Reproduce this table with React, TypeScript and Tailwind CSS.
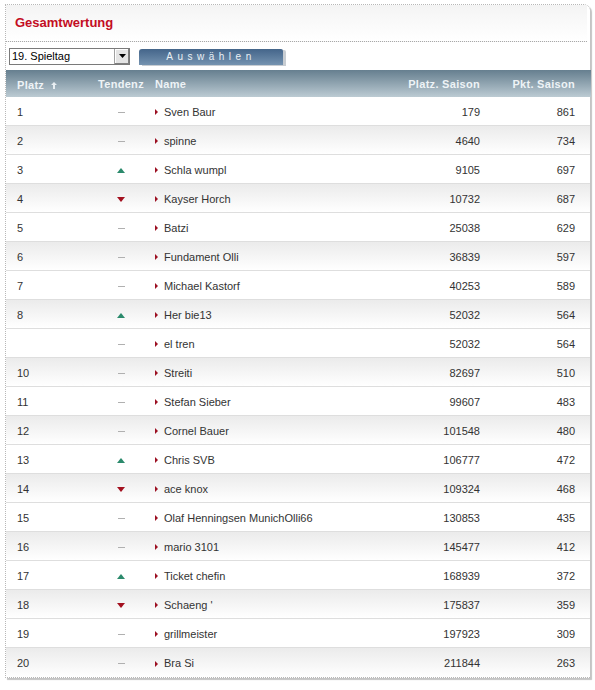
import React from "react";

type Trend = "up" | "down" | "same";

type Row = {
  platz: string;
  trend: Trend;
  name: string;
  saisonPlatz: number;
  punkte: number;
};

const rows: Row[] = [
  { platz: "1", trend: "same", name: "Sven Baur", saisonPlatz: 179, punkte: 861 },
  { platz: "2", trend: "same", name: "spinne", saisonPlatz: 4640, punkte: 734 },
  { platz: "3", trend: "up", name: "Schla wumpl", saisonPlatz: 9105, punkte: 697 },
  { platz: "4", trend: "down", name: "Kayser Horch", saisonPlatz: 10732, punkte: 687 },
  { platz: "5", trend: "same", name: "Batzi", saisonPlatz: 25038, punkte: 629 },
  { platz: "6", trend: "same", name: "Fundament Olli", saisonPlatz: 36839, punkte: 597 },
  { platz: "7", trend: "same", name: "Michael Kastorf", saisonPlatz: 40253, punkte: 589 },
  { platz: "8", trend: "up", name: "Her bie13", saisonPlatz: 52032, punkte: 564 },
  { platz: "", trend: "same", name: "el tren", saisonPlatz: 52032, punkte: 564 },
  { platz: "10", trend: "same", name: "Streiti", saisonPlatz: 82697, punkte: 510 },
  { platz: "11", trend: "same", name: "Stefan Sieber", saisonPlatz: 99607, punkte: 483 },
  { platz: "12", trend: "same", name: "Cornel Bauer", saisonPlatz: 101548, punkte: 480 },
  { platz: "13", trend: "up", name: "Chris SVB", saisonPlatz: 106777, punkte: 472 },
  { platz: "14", trend: "down", name: "ace knox", saisonPlatz: 109324, punkte: 468 },
  { platz: "15", trend: "same", name: "Olaf Henningsen MunichOlli66", saisonPlatz: 130853, punkte: 435 },
  { platz: "16", trend: "same", name: "mario 3101", saisonPlatz: 145477, punkte: 412 },
  { platz: "17", trend: "up", name: "Ticket chefin", saisonPlatz: 168939, punkte: 372 },
  { platz: "18", trend: "down", name: "Schaeng '", saisonPlatz: 175837, punkte: 359 },
  { platz: "19", trend: "same", name: "grillmeister", saisonPlatz: 197923, punkte: 309 },
  { platz: "20", trend: "same", name: "Bra Si", saisonPlatz: 211844, punkte: 263 },
];

function TrendIcon({ trend }: { trend: Trend }) {
  if (trend === "up") {
    return (
      <svg width="8" height="5" viewBox="0 0 8 5">
        <polygon points="0,5 8,5 4,0" fill="#2b8a6c" />
      </svg>
    );
  }
  if (trend === "down") {
    return (
      <svg width="8" height="5" viewBox="0 0 8 5">
        <polygon points="0,0 8,0 4,5" fill="#a3101f" />
      </svg>
    );
  }
  return <span className="block w-[7px] h-px bg-[#b0b0b0]" />;
}

export default function App() {
  return (
    <div
      className="w-[595px] h-[690px] bg-white pl-[5px] pt-[4px]"
      style={{ fontFamily: '"Liberation Sans", Arial, sans-serif' }}
    >
      <div className="w-[585px] border-l border-t border-b border-dotted border-[#b8b8b8] rounded-tr-[6px] shadow-[2px_2px_1px_#c4c4c4] bg-white">
        {/* title */}
        <div className="h-[37px] flex items-center pl-[9px] bg-gradient-to-b from-[#f4f4f4] to-white border-b border-dotted border-[#a8a8a8] mr-[3px]">
          <h1 className="text-[13px] font-bold text-[#c30d23] mt-[-1px]">
            Gesamtwertung
          </h1>
        </div>

        {/* controls */}
        <div className="h-[28px] flex items-center pl-[3px] gap-[9px]">
          <div className="w-[121px] h-[17px] border border-[#7a7a7a] flex items-center justify-between bg-white">
            <span className="text-[11px] text-black pl-[2px] leading-none">19. Spieltag</span>
            <span className="w-[15px] h-[15px] bg-[#e4e4e4] border-l border-[#a0a0a0] flex items-center justify-center shadow-[inset_-1px_-1px_0_#808080,inset_1px_1px_0_#fff]">
              <svg width="7" height="4" viewBox="0 0 7 4">
                <polygon points="0,0 7,0 3.5,4" fill="#000" />
              </svg>
            </span>
          </div>
          <button className="w-[144px] h-[16px] rounded-tl-[3px] rounded-tr-[2px] bg-gradient-to-b from-[#44658a] to-[#7593b0] text-[#eaf0f5] text-[10px] tracking-[4.5px] leading-none shadow-[3px_1px_0_#c8cdd2] mt-[1px]">
            Auswählen
          </button>
        </div>

        {/* header */}
        <div className="h-[27px] flex items-center bg-gradient-to-b from-[#667f8f] to-[#bccbd3] text-[11px] font-bold text-[#eef3f6] tracking-[0.3px] mr-[-1px] pt-[1px]">
          <div className="w-[88px] pl-[11px] flex items-center gap-[7px] pt-[2px]">
            <span>Platz</span>
            <svg width="6" height="7" viewBox="0 0 6 7">
              <polygon points="3,0 6,3 4,3 4,7 2,7 2,3 0,3" fill="#e8eef2" />
            </svg>
          </div>
          <div className="w-[54px] text-center">Tendenz</div>
          <div className="w-[232px] pl-[7px]">Name</div>
          <div className="w-[100px] text-right">Platz. Saison</div>
          <div className="w-[108px] text-right pr-[13px]">Pkt. Saison</div>
        </div>

        {/* rows */}
        <div>
          {rows.map((r, idx) => (
            <div
              key={idx}
              className={
                "h-[29px] flex items-center pt-[2px] text-[11px] text-[#333] border-b border-[#dedede] " +
                (idx % 2 === 1
                  ? "bg-gradient-to-b from-[#ebebeb] to-white"
                  : "bg-white") +
                (idx === rows.length - 1 ? " border-b-0" : "")
              }
            >
              <div className="w-[88px] pl-[11px]">{r.platz}</div>
              <div className="w-[54px] flex justify-center">
                <TrendIcon trend={r.trend} />
              </div>
              <div className="w-[232px] pl-[7px] flex items-center gap-[6px]">
                <svg width="3" height="6" viewBox="0 0 3 6">
                  <polygon points="0,0 3,3 0,6" fill="#9c1022" />
                </svg>
                <span>{r.name}</span>
              </div>
              <div className="w-[100px] text-right">{r.saisonPlatz}</div>
              <div className="w-[108px] text-right pr-[13px]">{r.punkte}</div>
            </div>
          ))}
        </div>
      </div>
    </div>
  );
}
